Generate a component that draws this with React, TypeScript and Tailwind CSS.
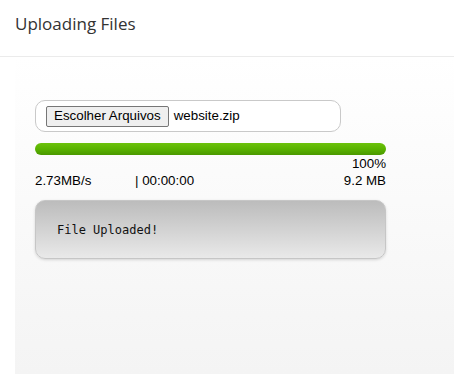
export default function App() {
  return (
    <div className="h-[374px] w-[454px] overflow-hidden bg-white">
      <header className="h-[57px] border-b border-[#ebebeb] pl-[15px] pt-[12px]">
        <h1 className="font-['Open_Sans',sans-serif] text-[17px] leading-[24px] text-[#333]">Uploading Files</h1>
      </header>
      <main className="ml-[15px] h-[317px] bg-gradient-to-b from-white to-[#f4f4f4] pl-[20px] pt-[43px] font-['Liberation_Sans',Arial,sans-serif] text-[13.33px] text-black">
        <div className="flex h-[32px] w-[306px] items-center rounded-[10px] border border-[#c9c9c9] bg-white pl-[10px]">
          <span className="flex h-[21px] items-center rounded-[2px] border border-[#767676] bg-[#efefef] px-[7px]">
            Escolher Arquivos
          </span>
          <span className="ml-[5px]">website.zip</span>
        </div>
        <div className="mt-[11px] h-[12px] w-[351px] rounded-full bg-gradient-to-b from-[#6cc20c] via-[#5ab300] to-[#4a9800]" />
        <div className="w-[351px] pt-[1px] text-right leading-[16px]">100%</div>
        <div className="flex w-[351px] leading-[17px]">
          <span className="w-[100px]">2.73MB/s</span>
          <span>| 00:00:00</span>
          <span className="ml-auto">9.2 MB</span>
        </div>
        <div className="mt-[11px] flex h-[59px] w-[351px] items-center rounded-[10px] border border-[#c6c6c6] bg-gradient-to-b from-[#bcbcbc] to-[#e9e9e9] pl-[21px] shadow-[0_1px_3px_rgba(0,0,0,0.15)]">
          <span className="font-['DejaVu_Sans_Mono',monospace] text-[12px] text-[#111]">File Uploaded!</span>
        </div>
      </main>
    </div>
  );
}
